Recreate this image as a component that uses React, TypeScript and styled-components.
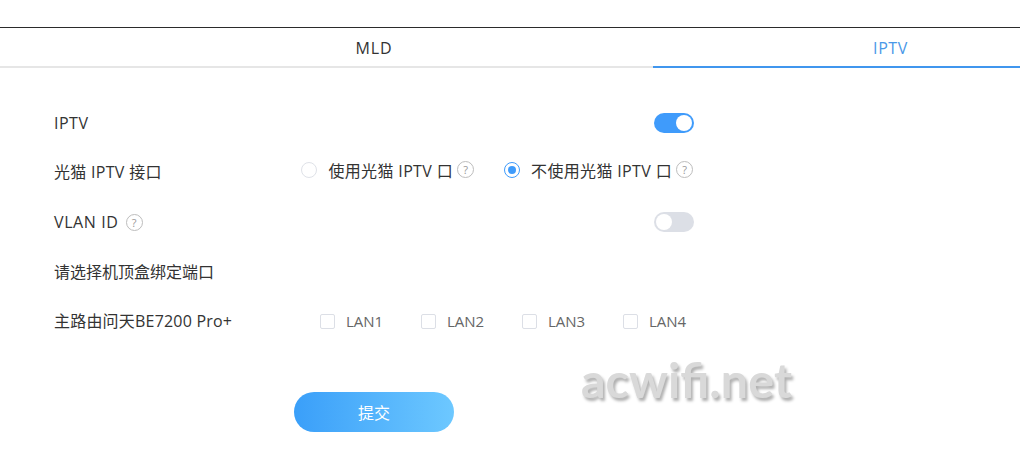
import styled, {createGlobalStyle} from "styled-components";

const ports = ['LAN1', 'LAN2', 'LAN3', 'LAN4'];

const GlobalStyle = createGlobalStyle`
    html, body {
        margin: 0;
        background: #fff;
    }
    body {
        font-family: "Open Sans", "Noto Sans CJK SC", sans-serif;
        font-size: 16px;
        color: #333;
    }
`

const Help = () => <HelpIcon>?</HelpIcon>

export default function App() {
    return (
        <Page>
            <GlobalStyle/>
            <Tabs>
                <MldTab>MLD</MldTab>
                <IptvTab>IPTV</IptvTab>
            </Tabs>

            <Form>
                <Row $top={45}>
                    <Label $spacing={0.5}>IPTV</Label>
                    <Switch $on><Knob/></Switch>
                </Row>
                <Row $top={29}>
                    <Label $spacing={0.3}>光猫 IPTV 接口</Label>
                    <RadioGroup>
                        <RadioItem>
                            <Radio/>
                            <RadioText>使用光猫 IPTV 口</RadioText>
                            <Help/>
                        </RadioItem>
                        <RadioItem>
                            <Radio $checked/>
                            <RadioText>不使用光猫 IPTV 口</RadioText>
                            <Help/>
                        </RadioItem>
                    </RadioGroup>
                </Row>
                <Row $top={30}>
                    <Label $spacing={0.6}>VLAN ID <Help/></Label>
                    <Switch><Knob/></Switch>
                </Row>
                <Row $top={30}>
                    <Label>请选择机顶盒绑定端口</Label>
                </Row>
                <Row $top={29}>
                    <PortLabel $spacing={0.2}>主路由问天BE7200 Pro+</PortLabel>
                    <Ports>
                        {ports.map(port => (
                            <Port key={port}>
                                <Checkbox/>
                                <span>{port}</span>
                            </Port>
                        ))}
                    </Ports>
                </Row>
                <Submit>提交</Submit>
            </Form>

            <Watermark>acwifi.net</Watermark>
        </Page>
    )
}

const Page = styled.div`
    position: relative;
    width: 1020px;
    height: 453px;
    padding-top: 27px;
    box-sizing: border-box;
    overflow: hidden;
`

const Tabs = styled.div`
    display: flex;
    width: 1127px;
    height: 40px;
    border-top: 1px solid #2b2b2b;
    box-sizing: content-box;
`

const MldTab = styled.div`
    width: 653px;
    flex-shrink: 0;
    padding: 10px 0 0 95px;
    box-sizing: border-box;
    text-align: center;
    line-height: 20px;
    letter-spacing: 0.8px;
    border-bottom: 2px solid #e6e6e6;
`

const IptvTab = styled.div`
    width: 474px;
    flex-shrink: 0;
    padding: 10px 0 0 1px;
    box-sizing: border-box;
    text-align: center;
    line-height: 20px;
    letter-spacing: 0.6px;
    color: #4a98e8;
    border-bottom: 2px solid #4096ee;
`

const Form = styled.div`
    display: flex;
    flex-direction: column;
    width: 640px;
    margin-left: 54px;
`

const Row = styled.div<{$top: number}>`
    display: flex;
    align-items: center;
    justify-content: space-between;
    height: 20px;
    margin-top: ${({$top}) => $top}px;
`

const Label = styled.div<{$spacing?: number}>`
    display: flex;
    align-items: center;
    gap: 7px;
    line-height: 20px;
    white-space: nowrap;
    letter-spacing: ${({$spacing = 0}) => $spacing}px;
`

const PortLabel = styled(Label)`
    width: 266px;
    flex-shrink: 0;
`

const Switch = styled.div<{$on?: boolean}>`
    display: flex;
    align-items: center;
    justify-content: ${({$on}) => $on ? 'flex-end' : 'flex-start'};
    width: 40px;
    height: 20px;
    padding: 0 2px;
    box-sizing: border-box;
    border-radius: 10px;
    background: ${({$on}) => $on ? '#3f9bfb' : '#dcdfe6'};
`

const Knob = styled.div`
    width: 16px;
    height: 16px;
    border-radius: 50%;
    background: #fff;
`

const RadioGroup = styled.div`
    display: flex;
    align-items: center;
    gap: 30px;
    margin: -5px 1px 0 0;
`

const RadioItem = styled.div`
    display: flex;
    align-items: center;
`

const Radio = styled.div<{$checked?: boolean}>`
    position: relative;
    width: 16px;
    height: 16px;
    box-sizing: border-box;
    border-radius: 50%;
    border: 1px solid ${({$checked}) => $checked ? '#3f9bfb' : '#dfe2e8'};

    &::after {
        content: '';
        display: ${({$checked}) => $checked ? 'block' : 'none'};
        position: absolute;
        inset: 3px;
        border-radius: 50%;
        background: #3f9bfb;
    }
`

const RadioText = styled.span`
    margin: 0 4px 0 11px;
    letter-spacing: 0.35px;
    white-space: nowrap;
`

const HelpIcon = styled.span`
    display: inline-flex;
    align-items: center;
    justify-content: center;
    width: 17px;
    height: 17px;
    box-sizing: border-box;
    border: 1px solid #bdbdbd;
    border-radius: 50%;
    font-size: 11px;
    line-height: 1;
    letter-spacing: 0;
    color: #999;
`

const Ports = styled.div`
    display: flex;
    gap: 38px;
    margin-right: 8px;
`

const Port = styled.label`
    display: flex;
    align-items: center;
    gap: 11px;
    width: 63px;
    font-size: 15px;
    color: #666;
`

const Checkbox = styled.span`
    width: 15px;
    height: 15px;
    flex-shrink: 0;
    box-sizing: border-box;
    border: 1px solid #dcdfe6;
    border-radius: 2px;
`

const Submit = styled.button`
    width: 160px;
    height: 40px;
    margin: 61px 0 0 240px;
    border: 0;
    border-radius: 20px;
    background: linear-gradient(90deg, #3a9ff9, #6dc8ff);
    color: #fff;
    font: inherit;
`

const Watermark = styled.div`
    position: absolute;
    left: 581px;
    top: 349px;
    font-family: "Lato", sans-serif;
    font-size: 48.5px;
    font-weight: 700;
    line-height: 60px;
    color: #d9d9d9;
    text-shadow: 2px 3px 3px #b0b0b0;
    filter: blur(0.5px);
`
